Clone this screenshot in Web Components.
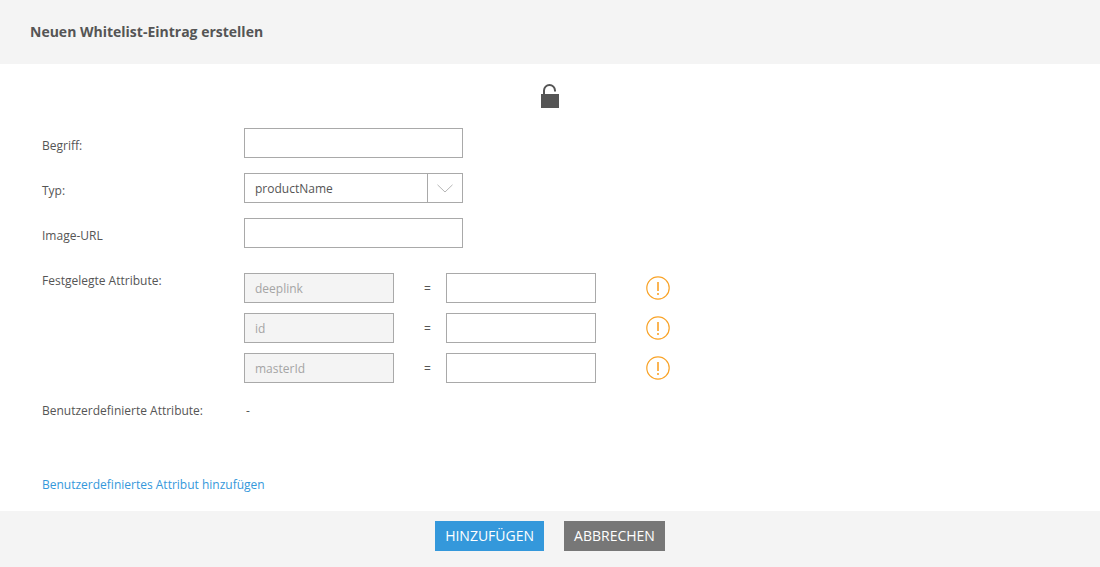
<!DOCTYPE html>
<html lang="de">
<head>
<meta charset="utf-8">
<title>Whitelist</title>
<style>
  html, body { margin: 0; height: 100%; background: #fff; }
  body { font: 12px/16px "Open Sans", sans-serif; color: #555; }
</style>
</head>
<body>
<wl-dialog>
  <span slot="title">Neuen Whitelist-Eintrag erstellen</span>
  <wl-lock></wl-lock>
  <wl-row label="Begriff:"><wl-input></wl-input></wl-row>
  <wl-row label="Typ:"><wl-select value="productName"></wl-select></wl-row>
  <wl-row label="Image-URL"><wl-input></wl-input></wl-row>
  <wl-row label="Festgelegte Attribute:" class="attrs">
    <wl-attr name="deeplink"></wl-attr>
    <wl-attr name="id"></wl-attr>
    <wl-attr name="masterId"></wl-attr>
  </wl-row>
  <wl-row label="Benutzerdefinierte Attribute:" class="custom"><span>-</span></wl-row>
  <wl-link>Benutzerdefiniertes Attribut hinzufügen</wl-link>
  <wl-button slot="footer" kind="primary">HINZUFÜGEN</wl-button>
  <wl-button slot="footer">ABBRECHEN</wl-button>
</wl-dialog>

<script>
// small helper, every element gets the same open shadow setup
function shadow(el, html) {
  el.attachShadow({ mode: 'open' }).innerHTML = html;
}

class WlDialog extends HTMLElement {
  constructor() {
    super();
    shadow(this, `
      <style>
        :host { display: flex; flex-direction: column; height: 567px; }
        header {
          height: 64px; box-sizing: border-box; padding: 23px 30px 0;
          background: #f4f4f4; font-size: 14px; line-height: 18px; font-weight: 700; color: #555;
        }
        main { flex: 1; padding: 20px 42px 0; }
        footer {
          height: 56px; box-sizing: border-box; padding-top: 10px;
          background: #f4f4f4; display: flex; justify-content: center; gap: 20px;
        }
      </style>
      <header><slot name="title"></slot></header>
      <main><slot></slot></main>
      <footer><slot name="footer"></slot></footer>`);
  }
}

class WlLock extends HTMLElement {
  constructor() {
    super();
    shadow(this, `
      <style>
        :host { display: flex; justify-content: center; height: 24px; margin-bottom: 20px; }
        svg { display: block; }
      </style>
      <svg width="18" height="24" viewBox="0 0 18 24">
        <path d="M3 10V6.5a5.5 5.5 0 0 1 11 0V7.500" fill="none" stroke="#555" stroke-width="2"/>
        <rect x="0" y="10" width="18" height="14" fill="#555"/>
      </svg>`);
  }
}

class WlRow extends HTMLElement {
  constructor() {
    super();
    shadow(this, `
      <style>
        :host { display: flex; margin-bottom: 15px; }
        :host(.attrs) { margin-top: 25px; margin-bottom: 0; }
        :host(.custom) { margin-top: 20px; margin-bottom: 58px; }
        .label { width: 202px; flex: none; padding-top: 10px; }
        :host(.attrs) .label { padding-top: 0; }
        :host(.custom) .label { padding-top: 0; }
        .field { display: flex; flex-direction: column; gap: 10px; }
        :host(.custom) .field { padding-left: 2px; }
      </style>
      <div class="label"></div>
      <div class="field"><slot></slot></div>`);
    this.shadowRoot.querySelector('.label').textContent = this.getAttribute('label');
  }
}

class WlInput extends HTMLElement {
  constructor() {
    super();
    shadow(this, `
      <style>
        :host { display: block; width: var(--w, 219px); height: 30px; }
        input {
          display: block; width: 100%; height: 100%; box-sizing: border-box; margin: 0; padding: 0 10px;
          border: 1px solid #a9a9a9; border-radius: 0; outline: 0; background: #fff;
          font: 12px "Open Sans", sans-serif; color: #555;
        }
        input:disabled { background: #f4f4f4; color: #a5a5a5; }
      </style>
      <input type="text">`);
    const input = this.shadowRoot.querySelector('input');
    if (this.hasAttribute('value')) input.setAttribute('value', this.getAttribute('value'));
    if (this.hasAttribute('disabled')) input.disabled = true;
  }
}

class WlSelect extends HTMLElement {
  constructor() {
    super();
    shadow(this, `
      <style>
        :host {
          display: flex; width: 219px; height: 30px; box-sizing: border-box;
          border: 1px solid #a9a9a9; background: #fff;
        }
        .value { flex: 1; padding: 1px 0 0 10px; line-height: 28px; color: #555; }
        .arrow {
          width: 34px; flex: none; border-left: 1px solid #a9a9a9;
          display: flex; align-items: center; justify-content: center;
        }
      </style>
      <div class="value"></div>
      <div class="arrow">
        <svg width="16" height="9" viewBox="0 0 16 9"><path d="M.5.8 8 8 15.5.8" fill="none" stroke="#b5b5b5"/></svg>
      </div>`);
    this.shadowRoot.querySelector('.value').textContent = this.getAttribute('value');
  }
}

class WlAttr extends HTMLElement {
  constructor() {
    super();
    shadow(this, `
      <style>
        :host { display: flex; align-items: center; height: 30px; --w: 150px; }
        .eq { width: 52px; box-sizing: border-box; padding: 2px 0 0 30px; color: #555; }
        wl-warn { margin-left: 50px; }
      </style>
      <wl-input disabled></wl-input>
      <span class="eq">=</span>
      <wl-input></wl-input>
      <wl-warn></wl-warn>`);
    this.shadowRoot.querySelector('wl-input').shadowRoot
      .querySelector('input').setAttribute('value', this.getAttribute('name'));
  }
}

class WlWarn extends HTMLElement {
  constructor() {
    super();
    shadow(this, `
      <style>
        :host { display: block; width: 24px; height: 24px; }
        svg { display: block; }
      </style>
      <svg width="24" height="24" viewBox="0 0 24 24">
        <circle cx="12" cy="12" r="11.2" fill="#fff" stroke="#f9a327" stroke-width="1.2"/>
        <path d="M12 6v9M12 17v2" stroke="#fbb452" stroke-width="2" fill="none"/>
      </svg>`);
  }
}

class WlLink extends HTMLElement {
  constructor() {
    super();
    shadow(this, `
      <style>
        :host { display: block; }
        a { color: #3498db; text-decoration: none; }
      </style>
      <a href="#"><slot></slot></a>`);
  }
}

class WlButton extends HTMLElement {
  constructor() {
    super();
    shadow(this, `
      <style>
        :host {
          display: block; height: 30px; padding: 0 10px;
          background: #777; color: #fff; font-size: 14px; line-height: 30px;
          cursor: pointer;
        }
        :host([kind="primary"]) { background: #3498db; }
      </style>
      <slot></slot>`);
  }
}

// children first so the upgrade of wl-attr finds a ready wl-input
customElements.define('wl-input', WlInput);
customElements.define('wl-warn', WlWarn);
customElements.define('wl-attr', WlAttr);
customElements.define('wl-select', WlSelect);
customElements.define('wl-row', WlRow);
customElements.define('wl-lock', WlLock);
customElements.define('wl-link', WlLink);
customElements.define('wl-button', WlButton);
customElements.define('wl-dialog', WlDialog);
</script>
</body>
</html>
